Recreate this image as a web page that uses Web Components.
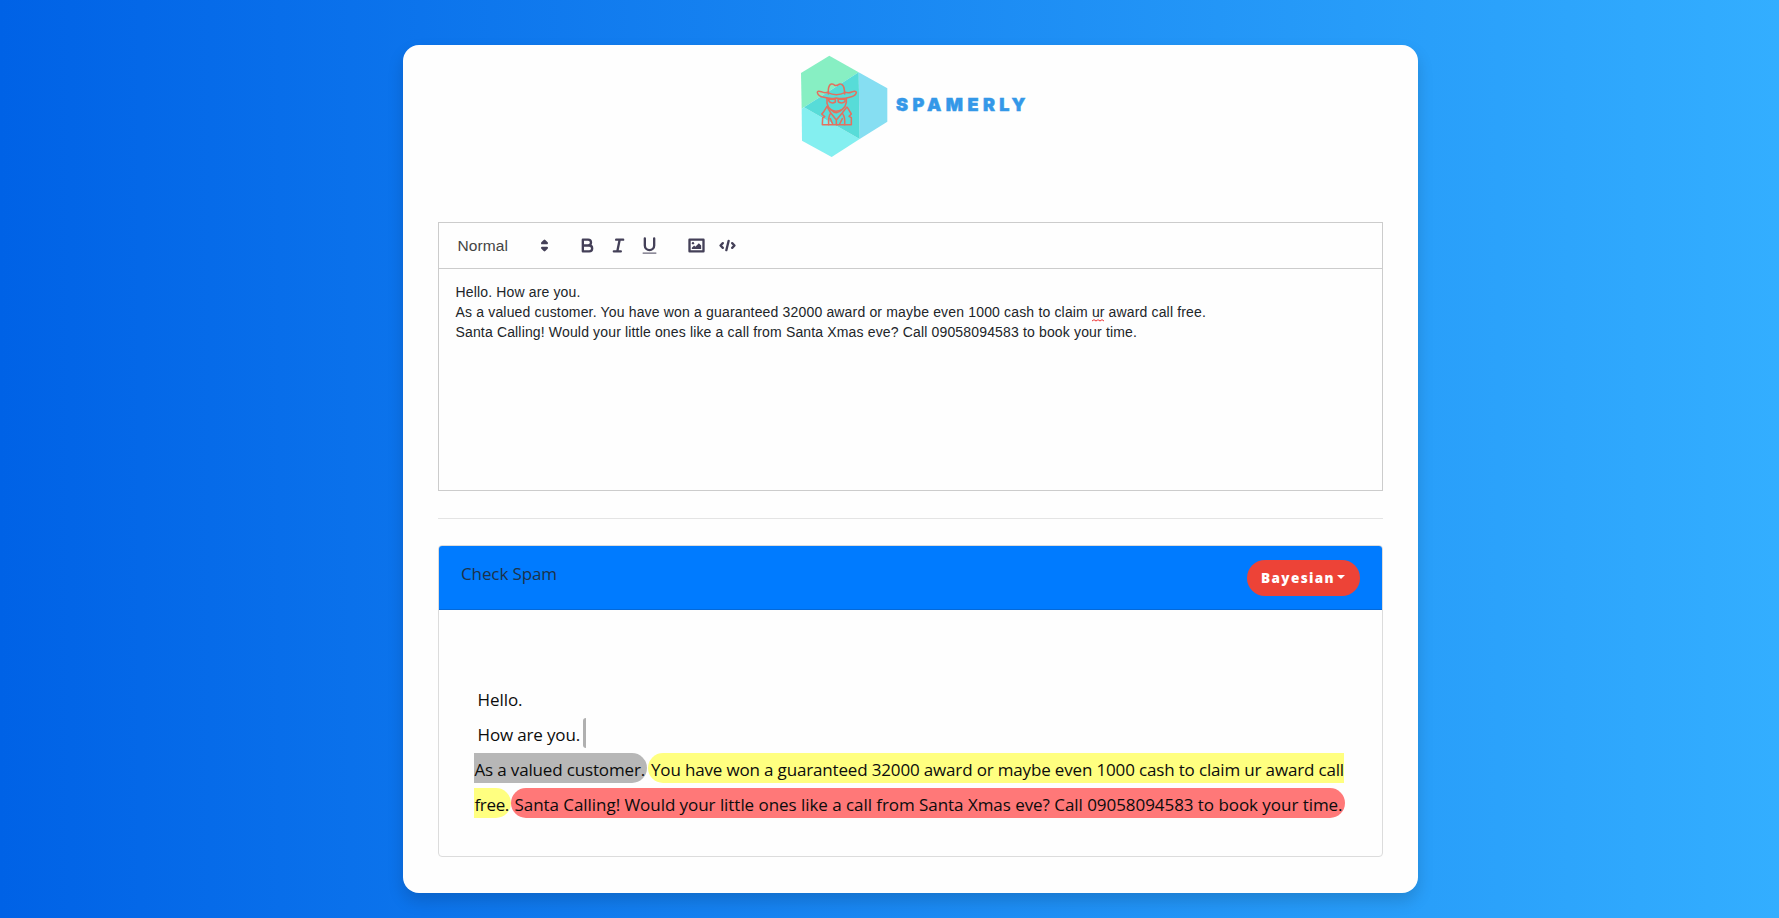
<!DOCTYPE html>
<html lang="en">
<head>
<meta charset="utf-8">
<title>Spamerly</title>
<style>
html,body{margin:0;height:100%}
body{font-family:"Open Sans","Noto Sans",sans-serif;overflow:hidden}
</style>
</head>
<body>
<spam-app></spam-app>
<script>
function define(name, html, ready) {
  customElements.define(name, class extends HTMLElement {
    constructor() {
      super();
      this.attachShadow({ mode: 'open' }).innerHTML = html;
    }
    connectedCallback() { if (ready) ready.call(this); }
  });
}

/* Spreads its text over the given width by adjusting the tracking. */
define('fit-text', `<style>:host{display:inline-block;white-space:pre}</style><slot></slot>`, function () {
  const target = parseFloat(this.getAttribute('width'));
  const fit = () => {
    this.style.letterSpacing = '0px';
    const n = this.textContent.length;
    const natural = this.getBoundingClientRect().width;
    this.style.letterSpacing = (target - natural) / n + 'px';
  };
  requestAnimationFrame(fit);
  fit();
});

define('brand-logo', `<style>
:host{display:flex;height:177px;box-sizing:border-box;padding:5px 0 0 392px;align-items:flex-start}
svg{width:100px;height:112px;flex:none}
.name{font:900 18px/22px Inter,sans-serif;color:#3498e8;-webkit-text-stroke:.5px #3498e8;margin:44px 0 0 1px}
</style>
<svg viewBox="0 0 300 336">
<path fill="#87efc3" d="M18 69 103 17 191 67 27 172 20 176Z"/>
<path fill="#84eff0" d="M20 176 27 172 194 267 110 321 21 272Z"/>
<path fill="#86def2" d="M191 67 277 115V215L194 267Z"/>
<path fill="#57dcd8" d="M27 172 191 67 194 267Z"/>
<g fill="none" stroke="#e4705f" stroke-width="4.6" stroke-linejoin="round" stroke-linecap="round">
<path d="M100 132V119Q101 105 109 102 116 101 119 106 124 108 129 105 134 100 140 103 147 107 148 119L149 132"/>
<path d="M99 127Q87 130 79 125 67 121 67 128 70 140 87 142 106 148 124 144 144 148 164 142 184 137 184 127 182 121 170 126 162 130 149 127"/>
<path d="M98 128Q124 140 150 128"/>
<path d="M96 145V160Q99 173 109 180 124 188 142 178 152 170 154 157V145"/>
<path d="M100 148H121V156Q111 162 103 155ZM129 148H150V155Q141 162 130 156Z"/>
<path d="M96 169 85 187 80 192 89 200 83 204 82 224H169V203L162 199 169 192 157 172"/>
<path d="M97 171 108 190 124 210 141 190 155 172M124 210V224M109 180Q124 197 142 178M106 191Q99 202 101 224M143 191Q151 203 149 224M106 206 113 222M142 206 134 222"/>
</g></svg>
<fit-text class="name" width="134">SPAMERLY</fit-text>`);

define('tool-icon', `<style>:host{display:flex;width:31px;justify-content:center;color:#444058}
svg{width:21px;height:21px;fill:none;stroke:currentColor;stroke-width:2;stroke-linecap:round;stroke-linejoin:round}
.f{fill:currentColor;stroke:none}</style><svg viewBox="0 0 18 18"></svg>`, function () {
  this.shadowRoot.querySelector('svg').innerHTML = {
    arrows: '<path style="fill:currentColor" d="M7 11 9 13 11 11ZM7 7 9 5 11 7Z"/>',
    bold: '<path d="M5 4H9.5A2.5 2.5 0 0 1 9.5 9H5ZM5 9H10.5A2.5 2.5 0 0 1 10.5 14H5Z"/>',
    italic: '<path d="M7 4H13M5 14H11M8 14 10 4"/>',
    underline: '<path d="M5 3V9A4.012 4.012 0 0 0 9 13 4.012 4.012 0 0 0 13 9V3"/><rect class="f" x="3" y="15" width="12" height="1" rx=".5" opacity=".8"/>',
    image: '<rect x="3" y="4" width="12" height="10"/><circle class="f" cx="6" cy="7" r="1"/><path class="f" d="M5 12 5 11 7 9 8 10 11 7 13 9V12Z"/>',
    code: '<path d="M5 7 3 9 5 11M13 7 15 9 13 11M10 5 8 13"/>'
  }[this.getAttribute('kind')];
});

define('editor-toolbar', `<style>
:host{display:flex;height:45px;align-items:center;border-bottom:1px solid #ccc;padding-left:18.5px;color:#444}
.pick{display:flex;align-items:center;width:114px;font:15.5px/20px "Liberation Sans",Arial,sans-serif}
.label{width:71.5px}
.group{display:flex;margin-right:16px}
</style>
<div class="pick"><div class="label"><fit-text width="50.5">Normal</fit-text></div><tool-icon kind="arrows"></tool-icon></div>
<div class="group"><tool-icon kind="bold"></tool-icon><tool-icon kind="italic"></tool-icon><tool-icon kind="underline"></tool-icon></div>
<div class="group"><tool-icon kind="image"></tool-icon><tool-icon kind="code"></tool-icon></div>`);

define('rich-editor', `<style>
:host{display:block;height:269px;box-sizing:border-box;border:1px solid #ccc}
.text{padding:13px 16.5px;font:14px/20px "Liberation Sans",Arial,sans-serif;color:#212529}
p{margin:0;height:20px;white-space:nowrap}
.typo{position:relative}
svg{position:absolute;left:0;bottom:0;width:13px;height:3px;fill:none;stroke:#e33}
</style>
<editor-toolbar></editor-toolbar>
<div class="text"><p><fit-text width="125">Hello. How are you.</fit-text></p>
<p><fit-text width="636.5">As a valued customer. You have won a guaranteed 32000 award or maybe even 1000 cash to claim </fit-text><fit-text class="typo" width="12.5">ur<svg viewBox="0 0 13 3"><path d="M0 2 2 .7 4 2 6 .7 8 2 10 .7 12 2"/></svg></fit-text><fit-text width="101.5"> award call free.</fit-text></p>
<p><fit-text width="681.5">Santa Calling! Would your little ones like a call from Santa Xmas eve? Call 09058094583 to book your time.</fit-text></p></div>`);

define('method-button', `<style>
:host{display:flex;box-sizing:border-box;width:113px;height:36px;border-radius:18px;background:#ed4337;color:#fff;align-items:center;padding-left:14px;font:800 13.5px/20px "Open Sans",sans-serif}
i{border:4.5px solid transparent;border-top:4.5px solid #fff;border-bottom:0;margin:-3px 0 0 2px}
</style><slot></slot><i></i>`);

define('spam-mark', `<style>
:host{display:flex;align-items:center;height:30px;box-sizing:border-box;padding-top:3px;font-size:17px;line-height:27px;color:#0c0c0c}
:host([tone=gray]){background:#b7b7b7;border-radius:0 15px 15px 0}
:host([tone=yellow]){background:#ffff80}
:host([tone=red]){background:#ff7878}
:host([round=left]){border-radius:15px 0 0 15px}
:host([round=right]){border-radius:0 15px 15px 0}
:host([round=both]){border-radius:15px}
</style><slot></slot>`);

define('spam-result', `<style>
:host{display:block;height:312px;box-sizing:border-box;border:1px solid #dcdcdc;border-radius:4px;overflow:hidden}
header{display:flex;justify-content:space-between;box-sizing:border-box;height:64px;background:#007bff;border-bottom:1px solid #0569d8;padding:14px 22px 0;color:#1d3249}
.title{font:17px/28px "Open Sans",sans-serif}
.body{display:flex;flex-direction:column;gap:5px;padding:73px 35px 0}
.line{display:flex}
.caret{width:3px;height:30px;border-radius:3px 0 0 3px;background:#b0b0b0;margin-left:3px}
</style>
<header><fit-text class="title" width="96">Check Spam</fit-text><method-button><fit-text width="74">Bayesian</fit-text></method-button></header>
<div class="body">
<div class="line"><spam-mark style="padding-left:3.5px"><fit-text width="45">Hello.</fit-text></spam-mark></div>
<div class="line"><spam-mark style="padding-left:3.5px"><fit-text width="102.5">How are you.</fit-text></spam-mark><span class="caret"></span></div>
<div class="line"><spam-mark tone="gray" style="width:173px;padding-left:.5px"><fit-text width="170.5">As a valued customer.</fit-text></spam-mark><spam-mark tone="yellow" round="left" style="width:696px;padding-left:3px;margin-left:1px"><fit-text width="693">You have won a guaranteed 32000 award or maybe even 1000 cash to claim ur award call</fit-text></spam-mark></div>
<div class="line"><spam-mark tone="yellow" round="right" style="width:37px;padding-left:.5px"><fit-text width="34.5">free.</fit-text></spam-mark><spam-mark tone="red" round="both" style="width:834px;padding-left:3.5px"><fit-text width="828">Santa Calling! Would your little ones like a call from Santa Xmas eve? Call 09058094583 to book your time.</fit-text></spam-mark></div>
</div>`);

define('spam-app', `<style>
:host{display:flex;justify-content:center;align-items:flex-start;box-sizing:border-box;height:918px;padding:45px 0 0 42px;background:linear-gradient(to right,#0062e6,#33aeff)}
main{width:1015px;height:848px;box-sizing:border-box;padding:0 35px;background:#fefefe;border-radius:16px;box-shadow:0 8px 16px rgba(0,0,0,.15)}
brand-logo{margin:0 -35px}
hr{border:0;border-top:1px solid #e4e4e4;margin:27px 0 26px}
</style>
<main><brand-logo></brand-logo><rich-editor></rich-editor><hr><spam-result></spam-result></main>`);
</script>
</body>
</html>
